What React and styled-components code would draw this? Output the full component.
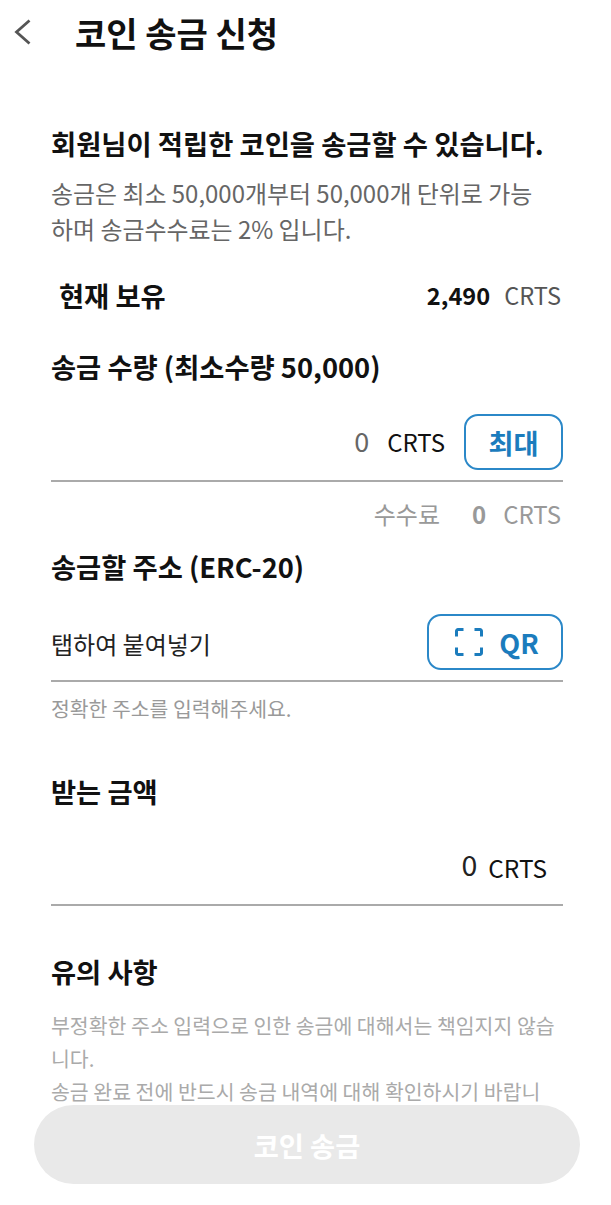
import React from "react";
import styled, { createGlobalStyle } from "styled-components";

const Global = createGlobalStyle`
  html, body { margin: 0; padding: 0; background: #fff; }
  body { font-family: "Noto Sans CJK KR", "Noto Sans", sans-serif; }
  * { box-sizing: border-box; }
`;
const Page = styled.div`
  position: relative; width: 611px; height: 1205px; overflow: hidden; background: #fff;
`;
const Header = styled.header`
  display: flex; align-items: center; height: 66px; padding-left: 13px;
`;
const Back = styled.svg`
  width: 20px; height: 28px; flex: none; margin-right: 42px;
`;
const Title = styled.h1`
  margin: 0; font-size: 34px; font-weight: 700; line-height: 66px; color: #111;
`;
const Content = styled.main`
  padding: 54px 48px 0 51px; display: flex; flex-direction: column;
`;
const Lead = styled.h2`
  margin: 0; font-size: 27.35px; line-height: 46px; font-weight: 700; color: #111; white-space: nowrap; flex: none;
`;
const Desc = styled.p`
  margin: 9px 0 0; font-size: 23.95px; line-height: 36px; color: #666; font-weight: 400; flex: none;
`;
const HoldRow = styled.div`
  display: flex; justify-content: space-between; align-items: center; height: 46px; margin-top: 25px; padding: 0 2px 0 8px; flex: none;
`;
const Strong = styled.span`
  font-size: 27.3px; font-weight: 700; color: #111;
`;
const Amount = styled.span`
  display: flex; align-items: baseline; gap: 14px; font-size: 23.6px; color: #555;
  b { font-weight: 700; color: #111; }
`;
const Section = styled.h3`
  margin: ${p => p.$top}px 0 0; font-size: 27.3px; line-height: 46px; font-weight: 700; color: #111; flex: none;
`;
const InputRow = styled.div`
  display: flex; justify-content: flex-end; align-items: center; gap: 19px; flex: none;
  border-bottom: 2px solid #aaa; margin-top: 25px; padding-bottom: 10px;
`;
const Value = styled.span`
  display: flex; align-items: baseline; gap: 18px; font-size: 24px; color: #111; margin-bottom: 3px;
  i { font-style: normal; font-size: 27px; color: #666; }
`;
const OutlineBtn = styled.button`
  display: flex; align-items: center; justify-content: center; gap: 16px;
  width: ${p => p.$w}px; height: 56px; border: 2px solid #2b88c8; border-radius: 14px; background: #fff;
  color: #1b7cbd; font: 700 27.2px "Noto Sans CJK KR", sans-serif; padding: 0 0 0 ${p => p.$pl || 0}px;
`;
const FeeRow = styled.div`
  display: flex; justify-content: flex-end; align-items: baseline; gap: 18px; height: 36px; margin-top: 14px; flex: none;
  font-size: 24px; color: #999; padding-right: 2px;
  b { margin-left: 14px; font-weight: 700; margin-right: -1px; }
`;
const AddressRow = styled(InputRow)`
  justify-content: space-between;
`;
const Placeholder = styled.span`
  font-size: 24px; color: #222; margin-top: 2px;
`;
const Hint = styled.p`
  margin: 9px 0 0; font-size: 20.45px; line-height: 34px; color: #999; flex: none;
`;
const ReceiveRow = styled.div`
  display: flex; justify-content: flex-end; align-items: baseline; gap: 11px; height: 92px; flex: none;
  border-bottom: 2px solid #aaa; padding: 31px 16px 0 0;
  font-size: 24.4px; color: #111;
  i { font-style: normal; font-size: 28.5px; color: #222; transform: translateY(-2px); }
`;
const Notice = styled.p`
  margin: 15px 0 0; font-size: 20.5px; line-height: 33px; color: #aaa; flex: none;
`;
const Submit = styled.button`
  position: absolute; left: 34px; top: 1105px; width: 546px; height: 79px; border: 0; border-radius: 40px;
  background: #e9e9e9; color: #fff; font: 700 27.3px "Noto Sans CJK KR", sans-serif;
`;

export default function App() {
  return (
    <Page>
      <Global />
      <Header>
        <Back viewBox="0 0 20 28" fill="none" aria-hidden="true">
          <path d="M16.500 1.500 3.500 13 16.500 24.500" stroke="#555" strokeWidth="2.8" />
        </Back>
        <Title>코인 송금 신청</Title>
      </Header>
      <Content>
        <Lead>회원님이 적립한 코인을 송금할 수 있습니다.</Lead>
        <Desc>송금은 최소 50,000개부터 50,000개 단위로 가능<br />하며 송금수수료는 2% 입니다.</Desc>
        <HoldRow>
          <Strong>현재 보유</Strong>
          <Amount><b>2,490</b>CRTS</Amount>
        </HoldRow>
        <Section $top={25}>송금 수량 (최소수량 50,000)</Section>
        <InputRow>
          <Value><i>0</i>CRTS</Value>
          <OutlineBtn $w={99}>최대</OutlineBtn>
        </InputRow>
        <FeeRow>수수료<b>0</b>CRTS</FeeRow>
        <Section $top={11}>송금할 주소 (ERC-20)</Section>
        <AddressRow>
          <Placeholder>탭하여 붙여넣기</Placeholder>
          <OutlineBtn $w={136} $pl={4}>
            <svg width="28" height="28" viewBox="0 0 28 28" fill="none" stroke="#1b7cbd" strokeWidth="3" aria-hidden="true">
              <path d="M1.500 8.500V3a1.500 1.500 0 0 1 1.500-1.500h5.500M19.500 1.500H25A1.500 1.500 0 0 1 26.500 3v5.500M26.500 19.500V25a1.500 1.500 0 0 1-1.500 1.500h-5.500M8.500 26.500H3A1.500 1.500 0 0 1 1.500 25v-5.500" />
            </svg>
            QR
          </OutlineBtn>
        </AddressRow>
        <Hint>정확한 주소를 입력해주세요.</Hint>
        <Section $top={43}>받는 금액</Section>
        <ReceiveRow><i>0</i>CRTS</ReceiveRow>
        <Section $top={42}>유의 사항</Section>
        <Notice>부정확한 주소 입력으로 인한 송금에 대해서는 책임지지 않습니다.<br />송금 완료 전에 반드시 송금 내역에 대해 확인하시기 바랍니다.</Notice>
      </Content>
      <Submit>코인 송금</Submit>
    </Page>
  );
}
